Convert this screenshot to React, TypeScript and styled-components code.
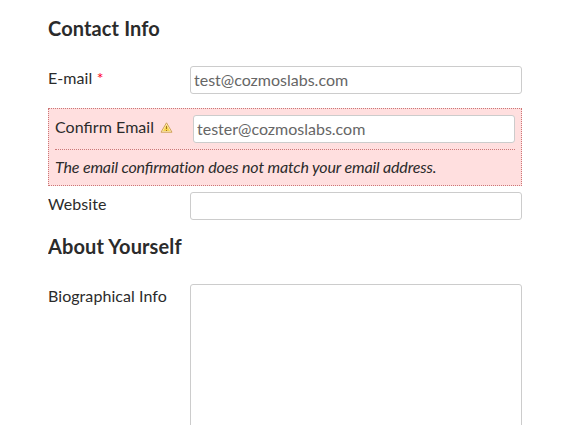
import React from 'react';
import styled, { createGlobalStyle } from 'styled-components';

const GlobalStyle = createGlobalStyle`
  * { box-sizing: border-box; }
  body { margin: 0; background: #fff; color: #2b2b2b; overflow: hidden; font: 400 16px/24px Lato, sans-serif; font-feature-settings: 'liga' 1; }
`;

const Form = styled.form`
  width: 474px;
  height: 425px;
  margin-left: 48px;
  padding-top: 14px;
  overflow: hidden;
`;

const Heading = styled.h4<{ $gap: number }>`
  margin: 0 0 ${p => p.$gap}px;
  font-size: 20px;
  line-height: 28px;
  font-weight: 700;
  letter-spacing: 0.12px;
`;

const Row = styled.div<{ $gap?: number }>`
  display: flex;
  margin-bottom: ${p => p.$gap ?? 0}px;
`;

const Label = styled.label<{ $width: number }>`
  flex: 0 0 ${p => p.$width}px;
  white-space: nowrap;
  letter-spacing: 0.06px;
`;

const Required = styled.span`
  margin-left: 4.5px;
  color: #ff0018;
`;

const Input = styled.input`
  flex: 1;
  min-width: 0;
  height: 28px;
  padding: 0 3px 2px;
  border: 1px solid #ccc;
  border-radius: 3px;
  outline: 0;
  background: #fff;
  color: #666;
  font: 400 16px Lato, sans-serif;
`;

const TextArea = styled.textarea`
  flex: 1;
  height: 180px;
  padding: 3px;
  border: 1px solid #ccc;
  border-radius: 3px;
  resize: none;
  outline: 0;
`;

const ErrorBox = styled.div`
  height: 78px;
  margin-bottom: 6px;
  padding: 6px;
  border: 1px dotted #c77;
  background: #ffdfdf;
`;

const ErrorMessage = styled.p`
  margin: 6px 0 0;
  padding-top: 5px;
  border-top: 1px dotted #c77;
  font-style: italic;
  letter-spacing: -0.145px;
`;

const PlainLetters = styled.span`
  font-feature-settings: 'liga' 0;
`;

const WarningIcon = styled.svg`
  margin-left: 6px;
  vertical-align: 0;
`;

export default function App() {
  return (
    <>
      <GlobalStyle />
      <Form>
        <Heading $gap={24}>Contact Info</Heading>
        <Row $gap={14}>
          <Label $width={142}>E-mail<Required>*</Required></Label>
          <Input defaultValue="test@cozmoslabs.com" />
        </Row>
        <ErrorBox>
          <Row>
            <Label $width={138}>
              Confirm Email
              <WarningIcon width="13" height="11" viewBox="0 0 13 11">
                <path d="M6.5 .8 12 10.2H1Z" fill="#fff0b8" stroke="#cfa05a" strokeLinejoin="round" />
                <path d="M6.5 2.8 10 9H3Z" fill="#f8d44e" />
                <path d="M6.5 4v3M6.5 8v1" stroke="#a07020" />
              </WarningIcon>
            </Label>
            <Input defaultValue="tester@cozmoslabs.com" />
          </Row>
          <ErrorMessage>The email confirma<PlainLetters>tion</PlainLetters> does not match your email address.</ErrorMessage>
        </ErrorBox>
        <Row $gap={12}>
          <Label $width={142}>Website</Label>
          <Input />
        </Row>
        <Heading $gap={24}>About Yourself</Heading>
        <Row>
          <Label $width={142}>Biographical Info</Label>
          <TextArea />
        </Row>
      </Form>
    </>
  );
}
